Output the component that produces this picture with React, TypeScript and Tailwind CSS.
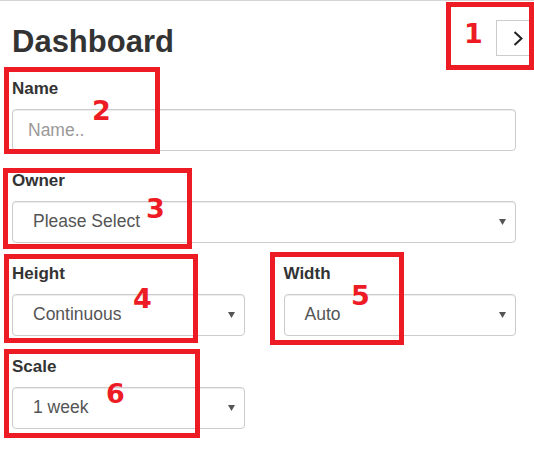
const Caret = () => (
  <svg width="7" height="6" viewBox="0 0 7 6">
    <path d="M0 0h7L3.5 6z" fill="#555" />
  </svg>
)

const FakeSelect = ({ value }: { value: string }) => (
  <div className="h-[42px] flex items-center justify-between border border-[#ccc] rounded-[4px] pl-[20px] pr-[9px] text-[17.5px] text-[#555] shadow-[inset_0_1px_1px_rgba(0,0,0,0.075)]">
    <span className="pb-[2px]">{value}</span>
    <Caret />
  </div>
)

const Label = ({ text }: { text: string }) => (
  <label className="block text-[17px] leading-[20px] font-bold text-[#333] mb-[10px]">{text}</label>
)

const Note = () => (
  <>
    <div className="absolute left-[446px] top-[2px] w-[88px] h-[68px] border-[5px] border-[#ed1c24]" />
    <div className="absolute left-[4px] top-[67px] w-[156px] h-[87px] border-[5px] border-[#ed1c24]" />
    <div className="absolute left-[3px] top-[168px] w-[189px] h-[81px] border-[5px] border-[#ed1c24]" />
    <div className="absolute left-[4px] top-[254px] w-[194px] h-[89px] border-[5px] border-[#ed1c24]" />
    <div className="absolute left-[270px] top-[252px] w-[134px] h-[93px] border-[5px] border-[#ed1c24]" />
    <div className="absolute left-[4px] top-[349px] w-[196px] h-[89px] border-[5px] border-[#ed1c24]" />

    <span className="absolute left-[464px] top-[20px] text-[27px] leading-[27px]">1</span>
    <span className="absolute left-[92px] top-[97px] text-[27px] leading-[27px]">2</span>
    <span className="absolute left-[146px] top-[195px] text-[27px] leading-[27px]">3</span>
    <span className="absolute left-[133px] top-[285px] text-[27px] leading-[27px]">4</span>
    <span className="absolute left-[351px] top-[282px] text-[27px] leading-[27px]">5</span>
    <span className="absolute left-[106px] top-[380px] text-[27px] leading-[27px]">6</span>
  </>
)

export default function App() {
  return (
    <div className="relative w-full h-[457px] bg-white overflow-hidden font-['Liberation_Sans',Arial,sans-serif]">
      <div className="border-t border-[#d4d4d4] flex justify-between items-start pt-[19px] pl-[12px]">
        <h1 className="mt-[4px] text-[31px] leading-[36px] font-bold text-[#333]">Dashboard</h1>
        <button className="w-[38px] h-[36px] border border-[#ccc] border-r-0 bg-white flex items-center justify-center pl-[4px]">
          <svg width="10" height="15" viewBox="0 0 10 15">
            <path d="M1.5 1l7 6.5-7 6.5" fill="none" stroke="#222" strokeWidth="2" />
          </svg>
        </button>
      </div>

      <div className="mt-[19px] pl-[12px] pr-[18px] flex flex-col gap-[21px]">
        <div>
          <Label text="Name" />
          <input
            className="w-full h-[42px] border border-[#ccc] rounded-[4px] pl-[15px] text-[17.5px] text-[#555] placeholder:text-[#999] outline-none shadow-[inset_0_1px_1px_rgba(0,0,0,0.075)]"
            type="text"
            placeholder="Name.."
          />
        </div>
        <div className="-mt-[1px]">
          <Label text="Owner" />
          <FakeSelect value="Please Select" />
        </div>
        <div className="grid grid-cols-2 gap-x-[39px]">
          <div>
            <Label text="Height" />
            <FakeSelect value="Continuous" />
          </div>
          <div>
            <Label text="Width" />
            <FakeSelect value="Auto" />
          </div>
        </div>
        <div className="grid grid-cols-2 gap-x-[39px]">
          <div>
            <Label text="Scale" />
            <FakeSelect value="1 week" />
          </div>
        </div>
      </div>

      <div className="font-['DejaVu_Sans',sans-serif] font-bold text-[#ed1c24]">
        <Note />
      </div>
    </div>
  )
}
